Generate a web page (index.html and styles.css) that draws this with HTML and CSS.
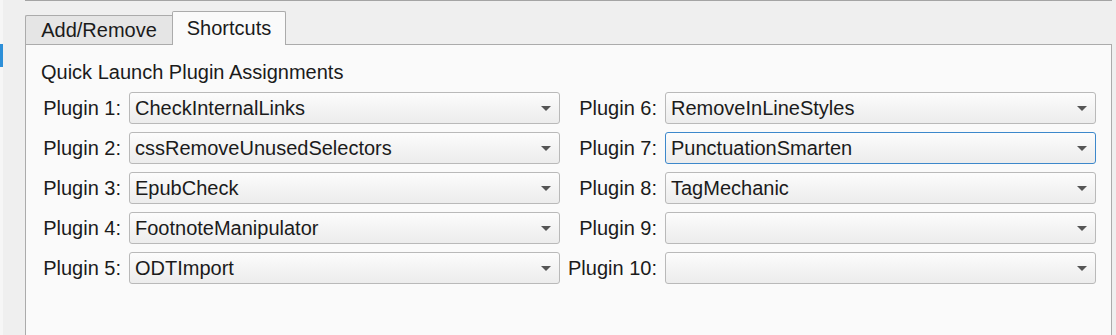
FILE: index.html
```html
<!DOCTYPE html>
<html lang="en">
<head>
    <meta charset="UTF-8">
    <title>Plugin Shortcuts</title>
    <link rel="stylesheet" href="styles.css">
</head>
<body>
    <div class="window">
        <!-- left edge with selection marker -->
        <div class="side">
            <div class="side-strip">
                <div class="side-marker"></div>
            </div>
        </div>

        <div class="main">
            <!-- tabs -->
            <div class="tab-bar">
                <div class="tab">Add/Remove</div>
                <div class="tab active">Shortcuts</div>
                <div class="tab-fill"></div>
            </div>

            <!-- tab page -->
            <div class="panel">
                <div class="group-title">Quick Launch Plugin Assignments</div>
                <div class="plugin-grid">
                    <label>Plugin 1:</label>
                    <div class="combo"><span class="combo-text">CheckInternalLinks</span><span class="combo-arrow"></span></div>
                    <label>Plugin 6:</label>
                    <div class="combo"><span class="combo-text">RemoveInLineStyles</span><span class="combo-arrow"></span></div>

                    <label>Plugin 2:</label>
                    <div class="combo"><span class="combo-text">cssRemoveUnusedSelectors</span><span class="combo-arrow"></span></div>
                    <label>Plugin 7:</label>
                    <div class="combo focused"><span class="combo-text">PunctuationSmarten</span><span class="combo-arrow"></span></div>

                    <label>Plugin 3:</label>
                    <div class="combo"><span class="combo-text">EpubCheck</span><span class="combo-arrow"></span></div>
                    <label>Plugin 8:</label>
                    <div class="combo"><span class="combo-text">TagMechanic</span><span class="combo-arrow"></span></div>

                    <label>Plugin 4:</label>
                    <div class="combo"><span class="combo-text">FootnoteManipulator</span><span class="combo-arrow"></span></div>
                    <label>Plugin 9:</label>
                    <div class="combo"><span class="combo-text"></span><span class="combo-arrow"></span></div>

                    <label>Plugin 5:</label>
                    <div class="combo"><span class="combo-text">ODTImport</span><span class="combo-arrow"></span></div>
                    <label>Plugin 10:</label>
                    <div class="combo"><span class="combo-text"></span><span class="combo-arrow"></span></div>
                </div>
            </div>
        </div>
    </div>
</body>
</html>
```

FILE: styles.css
```css
html, body {
    margin: 0;
    height: 335px;
    overflow: hidden;
}
body {
    font-family: "Liberation Sans", Arial, sans-serif;
    font-size: 20px;
    color: #1b1b1b;
    background: #efefef;
}
.window {
    display: flex;
    height: 335px;
}
.side {
    width: 25px;
    flex-shrink: 0;
}
.side-strip {
    width: 3px;
    height: 100%;
    background: #f6f6f6;
    padding-top: 44px;
    box-sizing: border-box;
}
.side-marker {
    height: 23px;
    background: #2d8fd8;
}
.main {
    width: 1087px;
    flex-shrink: 0;
    display: flex;
    flex-direction: column;
    border-top: 1px solid #a4a4a4;
}
.tab-bar {
    display: flex;
    align-items: flex-end;
    margin-top: 10px;
    height: 34px;
}
.tab {
    box-sizing: border-box;
    width: 147px;
    height: 30px;
    padding-top: 3px;
    text-align: center;
    line-height: 23px;
    background: #e5e5e5;
    border: 1px solid #ababab;
    border-right: none;
    border-radius: 2px 0 0 0;
}
.tab.active {
    width: 114px;
    height: 34px;
    padding-top: 5px;
    background: #fafafa;
    border-right: 1px solid #ababab;
    border-bottom: none;
    border-radius: 2px 2px 0 0;
}
.tab-fill {
    flex: 1;
    border-bottom: 1px solid #ababab;
    border-right: 1px solid #ababab;
}
/* page runs past the bottom of the window, so no bottom edge */
.panel {
    flex: 1;
    background: #fafafa;
    border-left: 1px solid #ababab;
    border-right: 1px solid #ababab;
    padding: 16px 0 0 15px;
}
.group-title {
    line-height: 23px;
    margin-bottom: 8px;
}
.plugin-grid {
    display: grid;
    grid-template-columns: 80px 431px 89px 431px;
    column-gap: 8px;
    row-gap: 8px;
    align-items: center;
}
.plugin-grid label {
    justify-self: end;
    white-space: nowrap;
}
.combo {
    box-sizing: border-box;
    height: 32px;
    display: flex;
    align-items: center;
    padding: 0 8px 0 5px;
    background: linear-gradient(#fcfcfc, #ececec);
    border: 1px solid #b9b9b9;
    border-radius: 3px;
}
.combo.focused {
    border-color: #3d88cb;
}
.combo-text {
    flex: 1;
    white-space: nowrap;
}
.combo-arrow {
    width: 0;
    height: 0;
    border-left: 5px solid transparent;
    border-right: 5px solid transparent;
    border-top: 5px solid #555;
}
```
